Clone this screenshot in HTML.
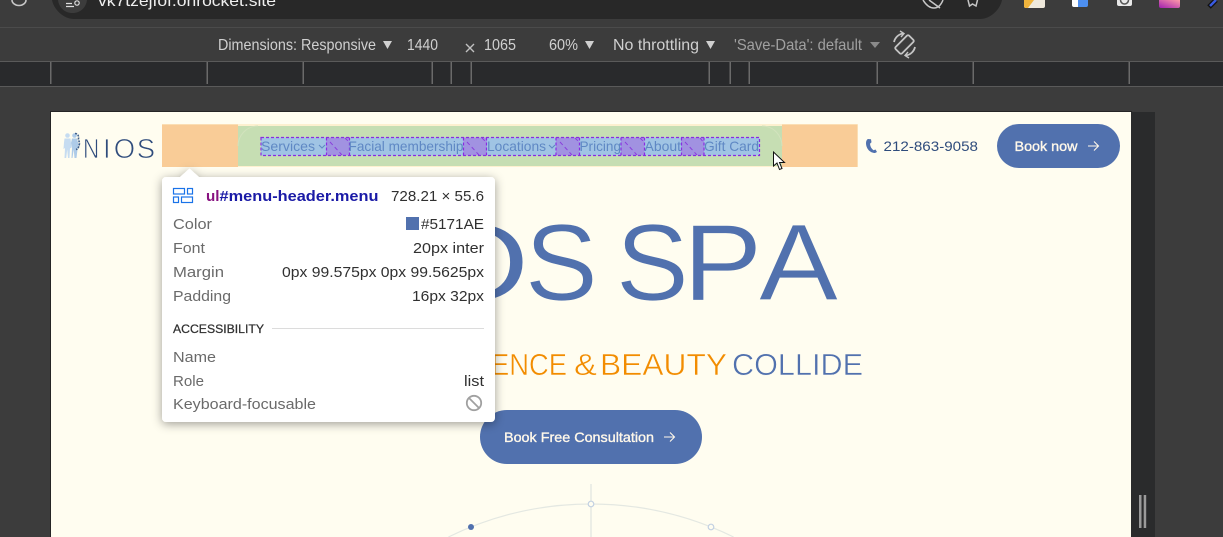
<!DOCTYPE html>
<html><head><meta charset="utf-8"><style>
html,body{margin:0;padding:0;width:1223px;height:537px;overflow:hidden;background:#3c3c3c}
svg{display:block;width:1223px;height:537px;overflow:hidden}
text{font-family:"Liberation Sans",sans-serif}
</style></head><body>
<svg width="1223" height="537" viewBox="0 0 1223 537" xmlns="http://www.w3.org/2000/svg">
<defs>
<filter id="sh" x="-10%" y="-10%" width="120%" height="125%"><feDropShadow dx="0" dy="2" stdDeviation="5" flood-color="#000" flood-opacity=".38"/></filter>
<linearGradient id="pk" x1="0" y1="1" x2="1" y2="0"><stop offset="0" stop-color="#a020b0"/><stop offset="1" stop-color="#ff9aa8"/></linearGradient>
</defs>
<rect width="1223" height="537" fill="#3c3c3c"/>
<!-- browser top -->
<path d="M52 0H1002C1000 10 990 19 980 19H74C64 19 54 10 52 0Z" fill="#282828"/>
<path d="M58 0H87C86 8 80 13 72.500 13S59 8 58 0Z" fill="#3c3c3c"/>
<path d="M12 0a7 5.500 0 0 0 14 0" fill="none" stroke="#c7c7c7" stroke-width="1.600"/>
<path d="M66 3.500h6M66 6.500H74" stroke="#ddd" stroke-width="1.300" fill="none"/><circle cx="77" cy="3" r="2.200" fill="none" stroke="#ddd" stroke-width="1.200"/>
<text x="98" y="6" font-size="16" fill="#f0f0f0" textLength="178" lengthAdjust="spacingAndGlyphs">vk7tzejfof.onrocket.site</text>
<path d="M923 0c3 5 7 8 11 8s7-3 9-8M929 0l11 8" fill="none" stroke="#c7c7c7" stroke-width="1.500"/>
<path d="M968 0l1.500 6 3-2 3.500 2 1.500-6" fill="none" stroke="#c7c7c7" stroke-width="1.500"/>
<path d="M1024 0H1045V6a2 2 0 0 1-2 2H1026a2 2 0 0 1-2-2z" fill="#efe9dc"/><path d="M1024 0h10l-6 8h-2a2 2 0 0 1-2-2z" fill="#f0b43c"/>
<path d="M1072 0h6v7h-4a2 2 0 0 1-2-2z" fill="#fff"/><path d="M1078 0h10v5a2 2 0 0 1-2 2h-8z" fill="#4d8ff0"/>
<path d="M1117 0h15v4a2 2 0 0 1-2 2h-11a2 2 0 0 1-2-2z" fill="#e8e8e8"/><path d="M1120.500 0a4 4 0 0 0 8 0" fill="none" stroke="#555" stroke-width="1.500"/>
<path d="M1159 0h21v6a2 2 0 0 1-2 2h-17a2 2 0 0 1-2-2z" fill="url(#pk)"/>
<path d="M1209 7l7-7" stroke="#111" stroke-width="5"/><path d="M1210 6l6-6" stroke="#3a5be0" stroke-width="2.500"/>
<rect x="0" y="27" width="1223" height="1" fill="#4b4b4b"/>
<!-- device toolbar -->
<g font-size="16" fill="#d0d0d0">
<text x="218" y="50" textLength="158" lengthAdjust="spacingAndGlyphs">Dimensions: Responsive</text>
<text x="407" y="50" textLength="31" lengthAdjust="spacingAndGlyphs">1440</text>
<text x="484" y="50" textLength="32" lengthAdjust="spacingAndGlyphs">1065</text>
<text x="549" y="50" textLength="29" lengthAdjust="spacingAndGlyphs">60%</text>
<text x="613" y="50" textLength="86" lengthAdjust="spacingAndGlyphs">No throttling</text>
<text x="734" y="50" fill="#a0a0a0" textLength="128" lengthAdjust="spacingAndGlyphs">'Save-Data': default</text>
</g>
<path d="M466 44l8 8M474 44l-8 8" stroke="#c0c0c0" stroke-width="1.400"/>
<g fill="#d0d0d0"><path d="M383 41h9l-4.500 8z"/><path d="M585 41h9l-4.500 8z"/><path d="M706 41h9l-4.500 8z"/><path d="M870 42h10l-5 6z" fill="#8a8a8a"/></g>
<g fill="none" stroke="#c4c4c4" stroke-width="1.800">
<rect x="-4.500" y="-9.500" width="9" height="19" rx="1.500" transform="translate(904.500 44.500) rotate(45)"/>
<path d="M894 42a11 11 0 0 1 9-8.500M915 47a11 11 0 0 1-9 8.500"/>
<path d="M900 31l4 2.500-3 3.500M909 58l-4-2.500 3-3.500" stroke-width="1.400"/>
</g>
<!-- ruler -->
<rect x="0" y="61" width="1223" height="1" fill="#5a5a5a"/>
<rect x="0" y="62" width="1223" height="24" fill="#292a2c"/>
<rect x="0" y="86" width="1223" height="1" fill="#5a5a5a"/>
<g fill="#6a6a6a">
<rect x="50" y="62" width="1.500" height="22"/><rect x="206.500" y="62" width="1.500" height="22"/><rect x="302.500" y="62" width="1.500" height="22"/><rect x="431.500" y="62" width="1.500" height="22"/><rect x="450.500" y="62" width="1.500" height="22"/><rect x="470.500" y="62" width="1.500" height="22"/><rect x="708.500" y="62" width="1.500" height="22"/><rect x="729.500" y="62" width="1.500" height="22"/><rect x="748.500" y="62" width="1.500" height="22"/><rect x="876.500" y="62" width="1.500" height="22"/><rect x="972.500" y="62" width="1.500" height="22"/><rect x="1128.500" y="62" width="1.500" height="22"/>
</g>
<!-- page -->
<rect x="50" y="111" width="1082" height="426" fill="#252525"/>
<rect x="1131" y="112" width="24" height="425" fill="#2a2b2c"/>
<rect x="51" y="112" width="1080" height="425" fill="#fffdf0"/>
<rect x="1139" y="495" width="2.500" height="33" fill="#9a9a9a"/><rect x="1143.700" y="495" width="2.500" height="33" fill="#9a9a9a"/>
<!-- logo -->
<g fill="#c6dcf1"><circle cx="67.500" cy="135.500" r="2.300"/><path d="M64.500 138.500h6l1 9-1.500 1-.5 9.500h-1.500l-.8-8.500-1 8.500h-1.700l.5-10-1.500 1 .5-6.500z"/></g>
<g fill="#aecbe8"><circle cx="74.500" cy="135.500" r="2.300"/><path d="M72 138.500h5l1.500 6-1 5-1 8.500h-2l-.8-8.500-1.200 8.500h-1l.5-10-1-5z"/></g>
<path d="M75 133.500c3 0 4 3 3.500 5s1.500 3 .8 6-1.300 4.500-3.300 5" fill="none" stroke="#3f5f8c" stroke-width="1.600" stroke-dasharray="2 1"/>
<g font-size="27.500" fill="#2f4c7c" stroke="#fffdf0" stroke-width=".75">
<text transform="translate(83 158) scale(.82 1)">N</text>
<text x="103" y="158">I</text>
<text x="113.700" y="158">O</text>
<text x="136.800" y="158">S</text>
</g>
<!-- highlight -->
<rect x="162" y="124" width="696" height="43" fill="#fdf0cf"/>
<rect x="162" y="124.500" width="76" height="42.500" fill="#f9cc97"/>
<rect x="782" y="124.500" width="75.500" height="42.500" fill="#f9cc97"/>
<rect x="238" y="126" width="544" height="40" fill="#c6deb3"/>
<path d="M238 146c0-10 8-20 20-20M782 146c0-10-8-20-20-20" fill="none" stroke="#d2e2bd"/>
<rect x="261" y="137.500" width="498.500" height="18" fill="#a0c4e4"/>
<g fill="#a192e1">
<rect x="326.300" y="137.500" width="23" height="18"/><rect x="463.500" y="137.500" width="23.300" height="18"/><rect x="556" y="137.500" width="23.300" height="18"/><rect x="621" y="137.500" width="23.300" height="18"/><rect x="681.300" y="137.500" width="22.700" height="18"/>
</g>
<g stroke="#8a2be2" stroke-width="1.200" stroke-dasharray="3 2" fill="none">
<rect x="261" y="137.500" width="498.500" height="18"/>
<path d="M326.500 137.500V155.500M349.500 137.500V155.500M463.500 137.500V155.500M486.500 137.500V155.500M556 137.500V155.500M579.500 137.500V155.500M621 137.500V155.500M644.500 137.500V155.500M681.500 137.500V155.500M704 137.500V155.500"/>
</g>
<g stroke="#8a3fdc" stroke-width="1" stroke-dasharray="4 3" fill="none">
<path d="M330 142l12 13M345 138l5 5M467 142l12 13M482 138l5 5M560 142l12 13M575 138l5 5M625 142l12 13M640 138l5 5M685 142l12 13M700 138l4 5"/>
</g>
<g font-size="14" fill="#5f88c4">
<text x="261" y="151" textLength="54" lengthAdjust="spacingAndGlyphs">Services</text>
<text x="348.500" y="151" textLength="115" lengthAdjust="spacingAndGlyphs">Facial membership</text>
<text x="487" y="151" textLength="59" lengthAdjust="spacingAndGlyphs">Locations</text>
<text x="579.500" y="151" textLength="41.500" lengthAdjust="spacingAndGlyphs">Pricing</text>
<text x="644.500" y="151" textLength="36.500" lengthAdjust="spacingAndGlyphs">About</text>
<text x="704" y="151" textLength="55" lengthAdjust="spacingAndGlyphs">Gift Card</text>
</g>
<path d="M319 145l3 3 3-3M549 145l3 3 3-3" fill="none" stroke="#5f88c4" stroke-width="1.100"/>
<!-- phone + book now -->
<path d="M868 139l3 .3.500 3-1.500 1.500c.3 3 1.500 5 3.500 6.500l2-.8 1.500 2.500-2 1c-5 0-9-4.500-9-10 0-2 .8-3.500 2-4z" fill="#5171ae"/>
<text x="883.500" y="151" font-size="14" fill="#2f4c7c" textLength="94.500" lengthAdjust="spacingAndGlyphs">212-863-9058</text>
<rect x="997" y="124" width="123" height="44" rx="22" fill="#5171ae"/>
<text x="1014.500" y="151" font-size="13.500" stroke="#fff8ea" stroke-width=".35" fill="#fff8ea" textLength="63" lengthAdjust="spacingAndGlyphs">Book now</text>
<path d="M1088 146h10M1094 141.500l4.500 4.500-4.500 4.500" fill="none" stroke="#fff8ea" stroke-width="1.100"/>
<!-- hero -->
<g font-size="109" fill="#5171ae" stroke="#fffdf0" stroke-width=".8">
<text transform="translate(419.600 300) scale(1.300 1)">O</text>
<text x="525" y="300">S</text>
<text x="616" y="300">S</text>
<text transform="translate(683 300) scale(1.090 1)">P</text>
<text transform="translate(759 300) scale(1.087 1)">A</text>
</g>
<g font-size="30.500" stroke="#fffdf0" stroke-width=".5">
<g fill="#f28c00">
<text x="491" y="375" textLength="76" lengthAdjust="spacingAndGlyphs">ENCE</text>
<text x="574" y="375" textLength="23" lengthAdjust="spacingAndGlyphs">&amp;</text>
<text x="600" y="375" textLength="127" lengthAdjust="spacingAndGlyphs">BEAUTY</text>
</g>
<text x="732" y="375" fill="#5171ae" textLength="131" lengthAdjust="spacingAndGlyphs">COLLIDE</text>
</g>
<rect x="480" y="410" width="222" height="54" rx="27" fill="#5171ae"/>
<text x="504" y="442" font-size="14" stroke="#fff8ea" stroke-width=".35" fill="#fff8ea" textLength="150" lengthAdjust="spacingAndGlyphs">Book Free Consultation</text>
<path d="M664 437h10.500M670 432.500l4.500 4.500-4.500 4.500" fill="none" stroke="#fff8ea" stroke-width="1.100"/>
<!-- orbit -->
<path d="M448.400 537A324.500 324.500 0 0 1 733.600 537" fill="none" stroke="#e4e8e2" stroke-width="1.200"/>
<rect x="590.300" y="484" width="1.400" height="53" fill="#e4e8e2"/>
<circle cx="591" cy="504" r="2.800" fill="#fffdf0" stroke="#c2d0e2" stroke-width="1.200"/>
<circle cx="711" cy="527" r="2.800" fill="#fffdf0" stroke="#c2d0e2" stroke-width="1.200"/>
<circle cx="471" cy="527" r="3" fill="#5171ae"/>
<!-- popup -->
<g filter="url(#sh)">
<path d="M166 177H180L189.500 168.500 199 177H491a4 4 0 0 1 4 4V418a4 4 0 0 1-4 4H166a4 4 0 0 1-4-4V181a4 4 0 0 1 4-4z" fill="#fff"/>
</g>
<g fill="none" stroke="#1a73e8" stroke-width="1.200">
<rect x="173.500" y="188.500" width="11" height="5.500"/><rect x="187.500" y="188.500" width="5" height="5.500"/><rect x="173.500" y="197" width="5" height="5.500"/><rect x="181.500" y="197" width="11" height="5.500"/>
</g>
<g font-size="15" font-weight="bold">
<text x="206" y="201" fill="#881280" textLength="13.500" lengthAdjust="spacingAndGlyphs">ul</text>
<text x="219.500" y="201" fill="#1a1aa6" textLength="159" lengthAdjust="spacingAndGlyphs">#menu-header.menu</text>
</g>
<g font-size="15" fill="#303030">
<text x="391" y="201" textLength="93" lengthAdjust="spacingAndGlyphs">728.21 × 55.6</text>
<text x="421" y="229" textLength="63" lengthAdjust="spacingAndGlyphs">#5171AE</text>
<text x="413" y="253" textLength="71" lengthAdjust="spacingAndGlyphs">20px inter</text>
<text x="282" y="277" textLength="202" lengthAdjust="spacingAndGlyphs">0px 99.575px 0px 99.5625px</text>
<text x="412" y="301" textLength="72" lengthAdjust="spacingAndGlyphs">16px 32px</text>
<text x="464" y="386" textLength="20" lengthAdjust="spacingAndGlyphs">list</text>
</g>
<rect x="406" y="217" width="13" height="13" fill="#5171ae"/>
<g font-size="15" fill="#6a6a6a">
<text x="173" y="229" textLength="39" lengthAdjust="spacingAndGlyphs">Color</text>
<text x="173" y="253" textLength="32" lengthAdjust="spacingAndGlyphs">Font</text>
<text x="173" y="277" textLength="51" lengthAdjust="spacingAndGlyphs">Margin</text>
<text x="173" y="301" textLength="58" lengthAdjust="spacingAndGlyphs">Padding</text>
<text x="173" y="362" textLength="43" lengthAdjust="spacingAndGlyphs">Name</text>
<text x="173" y="386" textLength="31" lengthAdjust="spacingAndGlyphs">Role</text>
<text x="173" y="409" textLength="143" lengthAdjust="spacingAndGlyphs">Keyboard-focusable</text>
</g>
<text x="173" y="333" font-size="12" fill="#303030" stroke="#303030" stroke-width=".25" textLength="91" lengthAdjust="spacingAndGlyphs">ACCESSIBILITY</text>
<rect x="272" y="328" width="212" height="1" fill="#dcdcdc"/>
<circle cx="474" cy="403" r="7.200" fill="none" stroke="#a0a0a0" stroke-width="1.800"/>
<path d="M469 398l10 10" stroke="#a0a0a0" stroke-width="1.800"/>
<!-- cursor -->
<path d="M773.500 152V166l3.500-3 2.500 6.500 2.500-1-2.500-6h5z" fill="#fff" stroke="#111" stroke-width="1"/>
</svg>
</body></html>
